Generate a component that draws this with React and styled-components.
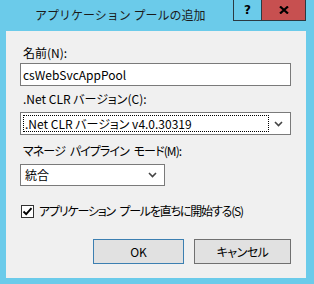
import React from "react";
import styled, { createGlobalStyle } from "styled-components";

const Global = createGlobalStyle`
  html, body { margin: 0; padding: 0; }
  body {
    width: 314px; height: 284px; overflow: hidden;
    background: #6bcbea;
    font-family: "Noto Sans CJK JP", "Noto Sans", sans-serif;
  }
`;

const Window = styled.div`
  width: 314px;
  height: 284px;
  box-sizing: border-box;
  background: #6bcbea;
  display: flex;
  flex-direction: column;
  padding: 0 8px 6px 6px;
`;

const TitleBar = styled.div`
  height: 31px;
  display: flex;
  align-items: flex-start;
`;

const Title = styled.div`
  flex: 1;
  padding-left: 29px;
  padding-top: 7px;
  font-size: 12px;
  line-height: 16px;
  color: #1b1b1b;
`;

const CaptionButton = styled.div`
  width: ${(p) => p.$w}px;
  height: 21px;
  box-sizing: border-box;
  border: 1px solid #2b3a42;
  border-top: none;
  background: ${(p) => (p.$close ? "#c75050" : "transparent")};
  display: flex;
  align-items: center;
  justify-content: center;
  font-family: "DejaVu Sans", sans-serif;
  font-weight: bold;
  font-size: 12px;
  color: #000;
  & + & { border-left: none; }
`;

const Content = styled.div`
  flex: 1;
  background: #f0f0f0;
  display: flex;
  flex-direction: column;
  padding: 14px 15px 0 14px;
  font-size: 12px;
  color: #000;
  font-feature-settings: "palt";
`;

const Label = styled.div`
  padding-left: 3px;
  line-height: 16px;
  height: 16px;
  letter-spacing: ${(p) => p.$ls || 0}px;
  word-spacing: ${(p) => (p.$ls ? 3 : 0)}px;
  margin-top: ${(p) => p.$mt || 0}px;
  margin-bottom: ${(p) => p.$mb || 0}px;
`;

const TextBox = styled.div`
  height: 23px;
  box-sizing: border-box;
  border: 1px solid #7a7a7a;
  background: #fff;
  display: flex;
  align-items: center;
  padding-left: 2px;
  line-height: 16px;
`;

const Select = styled.div`
  height: ${(p) => p.$h || 22}px;
  width: ${(p) => (p.$w ? `${p.$w}px` : "auto")};
  box-sizing: border-box;
  border: 1px solid #7a7a7a;
  background: #fff;
  display: flex;
  align-items: center;
  padding: 2px;
`;

const SelectText = styled.div`
  flex: 1;
  height: 100%;
  box-sizing: border-box;
  display: flex;
  align-items: center;
  padding-left: 2px;
  outline: ${(p) => (p.$focus ? "1px dotted #000" : "none")};
  outline-offset: -1px;
  line-height: 16px;
`;

const Arrow = styled.div`
  width: 19px;
  display: flex;
  justify-content: center;
  align-items: center;
`;

const CheckRow = styled.div`
  display: flex;
  align-items: center;
  height: 16px;
  line-height: 16px;
  margin-top: 17px;
  padding-left: 1px;
  gap: 5px;
`;

const CheckText = styled.span`
  letter-spacing: -1.2px;
  word-spacing: 3px;
`;

const Box = styled.div`
  width: 13px;
  height: 13px;
  box-sizing: border-box;
  border: 1px solid #333;
  background: #fff;
  display: flex;
  align-items: center;
  justify-content: center;
`;

const Buttons = styled.div`
  display: flex;
  justify-content: flex-end;
  gap: 10px;
  margin-top: 20px;
`;

const Button = styled.div`
  width: ${(p) => p.$w}px;
  height: 25px;
  box-sizing: border-box;
  background: #e1e1e1;
  border: 1px solid ${(p) => (p.$def ? "#3c7fb1" : "#707070")};
  display: flex;
  align-items: center;
  justify-content: center;
  line-height: 16px;
  letter-spacing: ${(p) => p.$ls || 0}px;
`;

const Chevron = () => (
  <svg width="9" height="6" viewBox="0 0 9 6">
    <path d="M1 1 L4.5 4.5 L8 1" fill="none" stroke="#444" strokeWidth="1.6" />
  </svg>
);

export default function App() {
  return (
    <>
      <Global />
      <Window>
        <TitleBar>
          <Title>アプリケーション プールの追加</Title>
          <CaptionButton $w={29}>?</CaptionButton>
          <CaptionButton $w={44} $close>
            <svg width="10" height="8" viewBox="0 0 10 8">
              <path d="M1 0.5 L9 7.5 M9 0.5 L1 7.5" stroke="#000" strokeWidth="2.2" />
            </svg>
          </CaptionButton>
        </TitleBar>
        <Content>
          <Label $mb={2}>名前(N):</Label>
          <TextBox>csWebSvcAppPool</TextBox>
          <Label $mt={5} $mb={5}>.Net CLR バージョン(C):</Label>
          <Select $h={23}>
            <SelectText $focus>.Net CLR バージョン v4.0.30319</SelectText>
            <Arrow><Chevron /></Arrow>
          </Select>
          <Label $mt={8} $mb={5} $ls={-0.9}>マネージ パイプライン モード(M):</Label>
          <Select $w={145}>
            <SelectText>統合</SelectText>
            <Arrow><Chevron /></Arrow>
          </Select>
          <CheckRow>
            <Box>
              <svg width="11" height="11" viewBox="0 0 11 11">
                <path d="M1.5 5.5 L4.2 8.2 L9.5 2.2" fill="none" stroke="#000" strokeWidth="1.9" />
              </svg>
            </Box>
            <CheckText>アプリケーション プールを直ちに開始する(S)</CheckText>
          </CheckRow>
          <Buttons>
            <Button $w={91} $def>OK</Button>
            <Button $w={97} $ls={-0.5}>キャンセル</Button>
          </Buttons>
        </Content>
      </Window>
    </>
  );
}
